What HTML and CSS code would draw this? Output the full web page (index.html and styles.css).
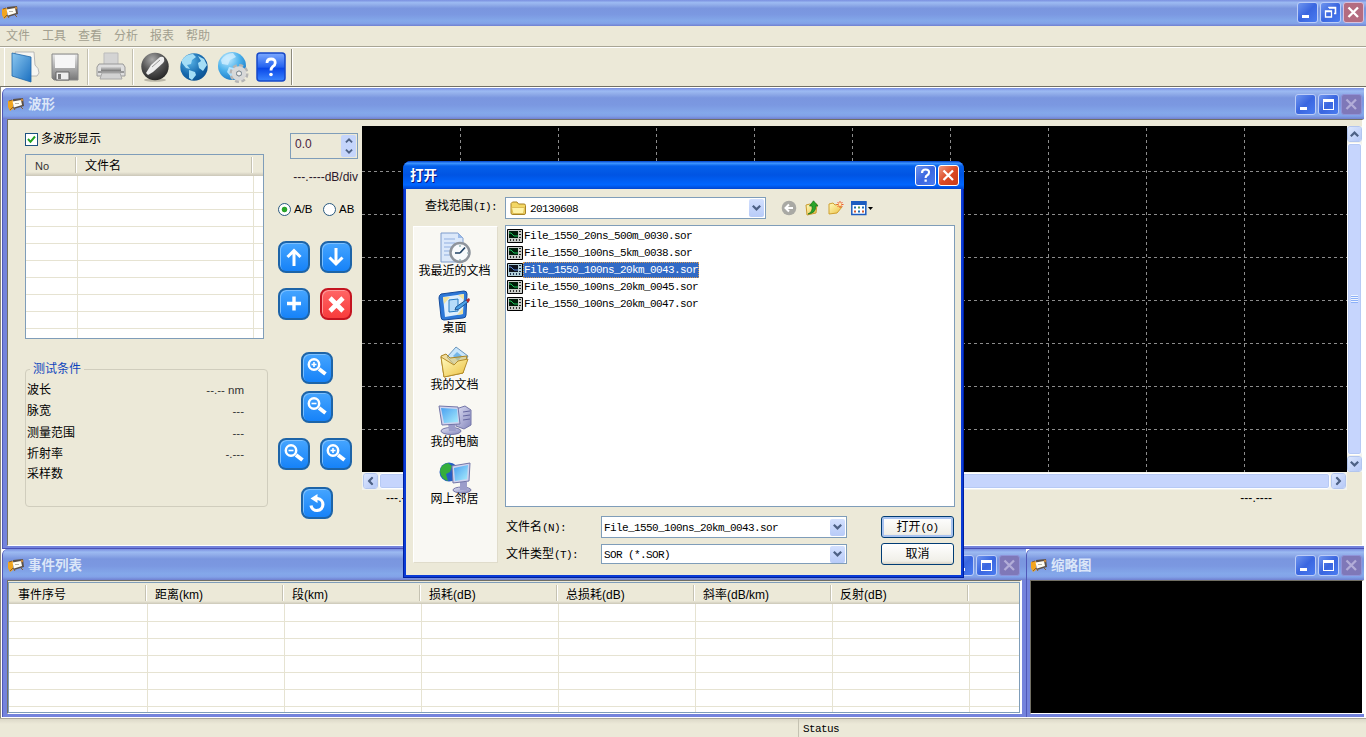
FILE: index.html
```html
<!DOCTYPE html>
<html lang="zh-CN">
<head>
<meta charset="utf-8">
<title>OTDR</title>
<link rel="stylesheet" href="styles.css">
</head>
<body>
<svg class="defs" width="0" height="0">
  <defs>
    <linearGradient id="gBlue" x1="0" y1="0" x2="1" y2="1"><stop offset="0" stop-color="#8cc8f0"/><stop offset="1" stop-color="#1a6fc0"/></linearGradient>
    <linearGradient id="gGrey" x1="0" y1="0" x2="0" y2="1"><stop offset="0" stop-color="#e8e8e8"/><stop offset="1" stop-color="#777"/></linearGradient>
    <radialGradient id="gDark" cx=".4" cy=".25" r=".8"><stop offset="0" stop-color="#aaa"/><stop offset=".5" stop-color="#555"/><stop offset="1" stop-color="#222"/></radialGradient>
    <radialGradient id="gGlobe" cx=".35" cy=".3" r=".8"><stop offset="0" stop-color="#59b4e8"/><stop offset=".6" stop-color="#1668ac"/><stop offset="1" stop-color="#0b4d8c"/></radialGradient>
    <radialGradient id="gSky" cx=".35" cy=".25" r=".85"><stop offset="0" stop-color="#c4ecff"/><stop offset=".5" stop-color="#4db2ec"/><stop offset="1" stop-color="#1170c0"/></radialGradient>
    <linearGradient id="gHelp" x1="0" y1="0" x2="0" y2="1"><stop offset="0" stop-color="#7eaaff"/><stop offset=".5" stop-color="#2563f0"/><stop offset=".55" stop-color="#0a48e8"/><stop offset="1" stop-color="#3b86ff"/></linearGradient>
    <linearGradient id="gFold" x1="0" y1="0" x2="1" y2="1"><stop offset="0" stop-color="#fffbc0"/><stop offset="1" stop-color="#ecc040"/></linearGradient>
    <linearGradient id="gScr" x1="0" y1="0" x2="1" y2="1"><stop offset="0" stop-color="#4aa0f0"/><stop offset="1" stop-color="#a8ecfc"/></linearGradient>
    <linearGradient id="gCase" x1="0" y1="0" x2="1" y2="1"><stop offset="0" stop-color="#dfe0f4"/><stop offset="1" stop-color="#8486bc"/></linearGradient>
    <symbol id="app" viewBox="0 0 16 13"><path d="M0 3 5 2v9l-3 2-2-4z" fill="#f2a51e"/><path d="M5 1 15 0l1 8-10 3z" fill="#5b5048"/><path d="M4.500 3.500 13 2l1 5-8 2.500z" fill="#fffdf4"/><path d="M7 5.500h4" stroke="#b8b4a8"/><path d="M1 3 4 2M2 12l3-3 2 3M13 9l2 2" stroke="#8b6230" fill="none"/><circle cx="14" cy="2" r="1.300" fill="#c2863b"/></symbol>
    <symbol id="scope" viewBox="0 0 16 14"><path d="M.5.5h15v13H.5z" fill="#c8ccc8" stroke="#000"/><path d="M2 2h9v7H2z" fill="#001c08"/><path d="M2 4h2l3 3h4" stroke="#19c35a" fill="none"/><path d="M13 2v1M13 5v1M13 8v1M3 11h1M6 11h1M9 11h1M12 11h1" stroke="#000" stroke-width="1.600"/></symbol>
    <symbol id="lens" viewBox="0 0 32 32"><circle cx="13" cy="12.500" r="5.200" fill="none" stroke="#fff" stroke-width="2.500"/><path d="M18 17 24.500 22" stroke="#fff" stroke-width="4"/><path d="M10.500 12.500h5" stroke="#fff" stroke-width="1.600"/></symbol>
    <symbol id="chev" viewBox="0 0 9 6"><path d="M.8.8 4.500 4.400 8.200.8" fill="none" stroke="#4d6185" stroke-width="2.200"/></symbol>
    <symbol id="close" viewBox="0 0 19 19"><path d="M4.500 4.500 14 14M14 4.500 4.500 14" stroke="currentColor" stroke-width="2.300"/></symbol>
    <symbol id="min" viewBox="0 0 19 19"><path d="M4 12h7v3H4z" fill="#fff"/></symbol>
    <symbol id="max" viewBox="0 0 19 19"><path d="M4 4h11v11H4zm1 3v7h9V7z" fill="#fff" fill-rule="evenodd"/></symbol>
  </defs>
</svg>

<div class="app">
  <header class="titlebar app-title">
    <svg class="app-icon" width="16" height="13"><use href="#app"/></svg>
    <div class="ctrls">
      <span class="cb"><svg><use href="#min"/></svg></span>
      <span class="cb"><svg viewBox="0 0 19 19"><path d="M8 5V4.500h6.500v6H13M8 5h6" fill="none" stroke="#fff" stroke-width="1.600"/><path d="M4.500 8h6v6h-6zM4 8.500h7" fill="none" stroke="#fff" stroke-width="1.300"/></svg></span>
      <span class="cb red-dim"><svg><use href="#close"/></svg></span>
    </div>
  </header>

  <nav class="menu"><span>文件</span><span>工具</span><span>查看</span><span>分析</span><span>报表</span><span>帮助</span></nav>

  <div class="toolbar">
    <svg class="tb-open" width="30" height="32" viewBox="0 0 30 32"><path d="M4 1 23 1 24 14q4 3 4 8l-2 3H10z" fill="#f6f6f2" stroke="#aaa" stroke-width=".8"/><path d="M1 2 20 6v25L1 25z" fill="url(#gBlue)" stroke="#1f66a8" stroke-width=".8"/></svg>
    <svg class="tb-save" width="28" height="28" viewBox="0 0 28 28"><path d="M1 1h26v26H3l-2-2z" fill="url(#gGrey)" stroke="#888"/><path d="M4 2h20v13H4z" fill="#f6f6f6"/><path d="M5 19h13v8H5z" fill="#eee" stroke="#666"/><path d="M7 21h3v5H7z" fill="#777"/></svg>
    <i class="sep"></i>
    <svg class="tb-print" width="30" height="30" viewBox="0 0 30 30"><path d="M8 1h14v13H8z" fill="#d4d4d4" stroke="#bbb"/><path d="M3 12h24l2 3v9H1v-9z" fill="#dedede" stroke="#999"/><path d="M5 14h20v5H5z" fill="url(#gGrey)"/><path d="M2 19h26v2H2z" fill="#999"/><path d="M6 21h18l2 6H4z" fill="#d2d2d2" stroke="#aaa"/></svg>
    <i class="sep"></i>
    <svg class="tb-tool" width="30" height="30" viewBox="0 0 30 30"><ellipse cx="15" cy="28" rx="11" ry="1.800" fill="#bbb7a8"/><circle cx="15" cy="14.500" r="13.700" fill="url(#gDark)"/><path d="M6 21 11 13 20 5q3-1 4 1 1 3-1 5l-10 9-5 3z" fill="#eee"/><path d="M12 15 20 8" stroke="#999"/></svg>
    <svg class="tb-globe" width="30" height="30" viewBox="0 0 30 30"><circle cx="15" cy="15" r="13.700" fill="url(#gGlobe)"/><path d="M3 8q4-6 11-6l3 3-4 3-1 4-4 1 3 4-4-1-4-5zM10 18l6 2 1 3-4 5-3-2zM19 4l6 3 3 6-4 6-4-3-1-5 3-2z" fill="#a4ddf6"/></svg>
    <svg class="tb-web" width="32" height="32" viewBox="0 0 32 32"><circle cx="15" cy="15" r="14" fill="url(#gSky)"/><path d="M4 9q5-7 12-7l3 4-6 3-2 5-6-1zM12 16l5 1 1 5-3 5-5-6z" fill="#cfeeff" opacity=".8"/><circle cx="22" cy="22.500" r="7.500" fill="none" stroke="#b4b4b4" stroke-width="4" stroke-dasharray="3.600 2.290"/><circle cx="22" cy="22.500" r="5" fill="none" stroke="#d8d8d8" stroke-width="4.500"/><circle cx="22" cy="22.500" r="2.500" fill="#eee" stroke="#888"/></svg>
    <svg class="tb-help" width="30" height="30" viewBox="0 0 30 30"><rect x="1" y="1" width="28" height="28" rx="3" fill="url(#gHelp)" stroke="#1648c8" stroke-width="1.500"/><path d="M11 11q0-4 4.200-4t4 4q0 2-2.500 3.600Q15 16 15 18.500" fill="none" stroke="#fff" stroke-width="2.800"/><circle cx="15" cy="22.500" r="1.800" fill="#fff"/></svg>
    <i class="sep end"></i>
  </div>

  <main class="mdi">
    <section class="win wave">
      <header class="titlebar">
        <svg class="app-icon" width="16" height="13"><use href="#app"/></svg><h2>波形</h2>
        <div class="ctrls"><span class="cb"><svg><use href="#min"/></svg></span><span class="cb"><svg><use href="#max"/></svg></span><span class="cb off"><svg><use href="#close"/></svg></span></div>
      </header>
      <div class="client wave-client">
        <div class="side">
          <label class="check"><i class="box"><svg width="9" height="9" viewBox="0 0 9 9"><path d="M1 4 3.500 6.800 8 1.500" fill="none" stroke="#21a121" stroke-width="2"/></svg></i>多波形显示</label>
          <div class="list files-list">
            <div class="list-head"><span>No</span><span>文件名</span><span></span></div>
            <div class="list-body"></div>
          </div>
          <fieldset class="cond">
            <legend>测试条件</legend>
            <dl>
              <dt>波长</dt><dd><b>--.--</b> nm</dd>
              <dt>脉宽</dt><dd><b>---</b></dd>
              <dt>测量范围</dt><dd><b>---</b></dd>
              <dt>折射率</dt><dd><b>-.---</b></dd>
              <dt>采样数</dt><dd></dd>
            </dl>
          </fieldset>
        </div>
        <div class="controls">
          <div class="spin"><span>0.0</span><i><svg class="up" width="8" height="5"><use href="#chev"/></svg><svg width="8" height="5"><use href="#chev"/></svg></i></div>
          <div class="div-label">---.----dB/div</div>
          <div class="radios"><i class="radio on"></i><span>A/B</span><i class="radio"></i><span>AB</span></div>
          <div class="pair p1">
            <span class="btn"><svg viewBox="0 0 32 32"><path d="M16 25V10M9.500 16 16 9.500 22.500 16" fill="none" stroke="#fff" stroke-width="3"/></svg></span>
            <span class="btn"><svg viewBox="0 0 32 32"><path d="M16 7v15M9.500 16.500 16 23 22.500 16.500" fill="none" stroke="#fff" stroke-width="3"/></svg></span>
          </div>
          <div class="pair p2">
            <span class="btn"><svg viewBox="0 0 32 32"><path d="M16 8.500v14M9 15.500h14" stroke="#fff" stroke-width="3.400"/></svg></span>
            <span class="btn red"><svg viewBox="0 0 32 32"><path d="M10 10 23 23M23 10 10 23" stroke="#fff" stroke-width="4.600"/></svg></span>
          </div>
          <div class="pair single p3"><span class="btn"><svg viewBox="0 0 32 32"><use href="#lens"/><path d="M13 10v5" stroke="#fff" stroke-width="1.600"/></svg></span></div>
          <div class="pair single p4"><span class="btn"><svg><use href="#lens"/></svg></span></div>
          <div class="pair p5">
            <span class="btn"><svg><use href="#lens"/></svg></span>
            <span class="btn"><svg viewBox="0 0 32 32"><use href="#lens"/><path d="M13 10v5" stroke="#fff" stroke-width="1.600"/></svg></span>
          </div>
          <div class="pair single p6"><span class="btn"><svg viewBox="0 0 32 32"><path d="M14 11.500h2.500a6 6 0 1 1-6.500 7" fill="none" stroke="#fff" stroke-width="3.200"/><path d="M9.500 11.500 16.500 7v9z" fill="#fff"/></svg></span></div>
        </div>
        <div class="plot">
          <svg class="chart" width="985" height="346" viewBox="0 0 985 346">
            <g fill="none" stroke="#8c8c8c" stroke-dasharray="3 3">
              <path d="M98.500 2V346M196.500 2V346M294.500 2V346M392.500 2V346M490.500 2V346M588.500 2V346M686.500 2V346M784.500 2V346M882.500 2V346"/>
              <path d="M0 45.500H985M0 88.500H985M0 131.500H985M0 174.500H985M0 217.500H985M0 260.500H985M0 303.500H985"/>
            </g>
          </svg>
          <div class="vbar"><i class="sb"><svg class="up" width="9" height="6"><use href="#chev"/></svg></i><i class="thumb"><em></em></i><i class="sb"><svg width="9" height="6"><use href="#chev"/></svg></i></div>
          <div class="hbar"><i class="sb"><svg class="left" width="9" height="6"><use href="#chev"/></svg></i><i class="thumb"></i><i class="sb"><svg class="right" width="9" height="6"><use href="#chev"/></svg></i></div>
          <div class="axis"><span>---.----</span><span>---.----</span></div>
        </div>
      </div>
    </section>

    <section class="win events">
      <header class="titlebar">
        <svg class="app-icon" width="16" height="13"><use href="#app"/></svg><h2>事件列表</h2>
        <div class="ctrls"><span class="cb"><svg><use href="#min"/></svg></span><span class="cb"><svg><use href="#max"/></svg></span><span class="cb off"><svg><use href="#close"/></svg></span></div>
      </header>
      <div class="client">
        <div class="list event-list">
          <div class="list-head"><span>事件序号</span><span>距离(km)</span><span>段(km)</span><span>损耗(dB)</span><span>总损耗(dB)</span><span>斜率(dB/km)</span><span>反射(dB)</span><span></span></div>
          <div class="list-body"></div>
        </div>
      </div>
    </section>

    <section class="win thumbnail">
      <header class="titlebar">
        <svg class="app-icon" width="16" height="13"><use href="#app"/></svg><h2>缩略图</h2>
        <div class="ctrls"><span class="cb"><svg><use href="#min"/></svg></span><span class="cb"><svg><use href="#max"/></svg></span><span class="cb off"><svg><use href="#close"/></svg></span></div>
      </header>
      <div class="client"></div>
    </section>
  </main>

  <footer class="status"><span></span><span class="mono">Status</span></footer>
</div>

<section class="dialog">
  <header class="dlg-title"><h2>打开</h2>
    <span class="cb help"><svg viewBox="0 0 19 19"><path d="M6 7q0-3.500 3.600-3.500T13 6.600q0 1.600-1.800 2.600-1.600 1-1.600 2.800" fill="none" stroke="#fff" stroke-width="2.200"/><path d="M8.500 13.500h2.300v2.300H8.500z" fill="#fff"/></svg></span>
    <span class="cb red"><svg><use href="#close"/></svg></span>
  </header>
  <div class="dlg-body">
    <div class="look">
      <label>查找范围<span class="mono">(I):</span></label>
      <div class="combo">
        <svg width="17" height="15" viewBox="0 0 17 15"><path d="M1 4V2.500L2.500 1H7l1.500 2H14q1.500 0 1.500 1.500V12q0 1.500-1.500 1.500H3Q1 13.500 1 12z" fill="#f3d765" stroke="#a98325"/><path d="M1.500 6.500h13l-1 6H3z" fill="#fff3a8" stroke="#d4af45" stroke-width=".7"/></svg>
        <span class="mono">20130608</span><i class="drop"><svg width="9" height="6"><use href="#chev"/></svg></i>
      </div>
      <div class="nav-icons">
        <svg width="16" height="16" viewBox="0 0 16 16"><circle cx="8" cy="8" r="7.300" fill="#a9a9a4"/><path d="M12 8H5M8 4.500 4.500 8 8 11.500" fill="none" stroke="#fff" stroke-width="2"/></svg>
        <svg width="16" height="16" viewBox="0 0 16 16"><path d="M2 5 6 4l2 1 5-1-1 9-9 2z" fill="url(#gFold)" stroke="#c99a2c"/><path d="M4 14q5-2 4-8H5.500L9.500.8l4.500 5.200h-2.500q1 7-7.500 8z" fill="#2aa52a" stroke="#13701a" stroke-width=".7"/></svg>
        <svg width="17" height="16" viewBox="0 0 17 16"><path d="M2 4 6 3l2 2 5-1v3l2 0-5 6-8 1z" fill="url(#gFold)" stroke="#cfa030"/><path d="M13 1v7M9.500 4.500h7M10.500 2l5 5M15.500 2l-5 5" stroke="#ee5b2b"/><circle cx="13" cy="4.500" r="1.400" fill="#fff0b0"/></svg>
        <svg width="24" height="16" viewBox="0 0 24 16"><path d="M.8 2h14v12.500H.8z" fill="#fff" stroke="#1b5cc0" stroke-width="1.500"/><path d="M0 1h15.500v4H0z" fill="#1b5cc0"/><path d="M3 7.500h2M11 7.500h2M7 11.500h2" stroke="#186cb4" stroke-width="2"/><path d="M7 7.500h2" stroke="#5a9a50" stroke-width="2"/><path d="M3 11.500h2M11 11.500h2" stroke="#cf5b31" stroke-width="2"/><path d="M17 7h5l-2.500 3z"/></svg>
      </div>
    </div>
    <aside class="places">
      <div><svg width="34" height="34" viewBox="0 0 34 34"><path d="M3 1h17l5 5v24H3z" fill="#dbe8fa" stroke="#7f9ccb"/><path d="M20 1v5h5z" fill="#9bbae8"/><path d="M6 7h11M6 11h11M6 15h8M6 19h7M6 23h7" stroke="#91afe0"/><circle cx="22" cy="20.500" r="9.500" fill="#f8fafc" stroke="#8e949c" stroke-width="2.500"/><path d="M22 21 27 15.500M22 21h-5" stroke="#246" stroke-width="1.700"/><path d="M22 13v2M22 27v2M29 21h1" stroke="#699"/></svg><span>我最近的文档</span></div>
      <div><svg width="34" height="34" viewBox="0 0 34 34"><path d="M3 5 26 2q3 0 3 3l-1 21q0 3-3 3L6 31q-3 0-3-3L1 9q0-3 2-4z" fill="#2d78d8" stroke="#154c9c"/><path d="M5 8 26 5l-1 20-18 3z" fill="#dceefe"/><path d="M5 8h7l-6 7zM19 26l6-7v6zM20 6l6-1v6z" fill="#f1e39f"/><path d="M11 11 20 10v12l-9 1z" fill="#b6dcfa" stroke="#247bc5"/><path d="M18 18 28 11l2 2-9 7-4 1z" fill="#4ba0e6" stroke="#205998"/><path d="M28 11l3-2 1 2-2 3z" fill="#b32b2b"/></svg><span>桌面</span></div>
      <div><svg width="34" height="34" viewBox="0 0 34 34"><path d="M9 11 18 1l12 9-8 15z" fill="#c8e5fa" stroke="#6995bd"/><path d="M15 10 19 6l5 4-4 5z" fill="#74b6e8"/><path d="M3 10 8 8l4 4 17-2-4 17-19 4z" fill="#eac75b" stroke="#ad8420" fill-opacity=".55"/><path d="M3 11 6 31 25 27 30 13 20 15 16 19z" fill="url(#gFold)" stroke="#b58e2c"/></svg><span>我的文档</span></div>
      <div><svg width="34" height="34" viewBox="0 0 34 34"><path d="M18 6 27 3l6 4v15l-7 4-8-3z" fill="url(#gCase)" stroke="#7476a8"/><path d="M25 9 32 8M25 13l7-1M25 17l7-1" stroke="#6466a0"/><ellipse cx="13" cy="28" rx="10" ry="3.500" fill="url(#gCase)" stroke="#7677a9"/><path d="M10 20h7l1 8h-7z" fill="#9c9dca"/><path d="M1 3 20 4l2 17-18 1z" fill="#cfd3ef" stroke="#7476a8"/><path d="M3 5 19 6l1 13-14 1z" fill="url(#gScr)"/></svg><span>我的电脑</span></div>
      <div><svg width="34" height="34" viewBox="0 0 34 34"><circle cx="11" cy="12" r="9.500" fill="#245fc4"/><path d="M2 11q1-7 8-8l4 3-2 6-4 2 2 7q-7-2-8-10z" fill="#35ae3c"/><ellipse cx="24" cy="30" rx="9" ry="3" fill="url(#gCase)" stroke="#7677a9"/><path d="M22 22h7v8h-7z" fill="#9c9dca"/><path d="M14 6 32 3l-1 18-16 2z" fill="#cfd3ef" stroke="#7476a8"/><path d="M16 8 30 5l-1 14-12 2z" fill="url(#gScr)"/></svg><span>网上邻居</span></div>
    </aside>
    <ul class="files">
      <li><svg><use href="#scope"/></svg><span class="mono">File_1550_20ns_500m_0030.sor</span></li>
      <li><svg><use href="#scope"/></svg><span class="mono">File_1550_100ns_5km_0038.sor</span></li>
      <li class="sel"><svg><use href="#scope"/></svg><span class="mono">File_1550_100ns_20km_0043.sor</span></li>
      <li><svg><use href="#scope"/></svg><span class="mono">File_1550_100ns_20km_0045.sor</span></li>
      <li><svg><use href="#scope"/></svg><span class="mono">File_1550_100ns_20km_0047.sor</span></li>
    </ul>
    <div class="form">
      <label>文件名<span class="mono">(N):</span></label>
      <div class="combo"><span class="mono">File_1550_100ns_20km_0043.sor</span><i class="drop"><svg width="9" height="6"><use href="#chev"/></svg></i></div>
      <span class="push default">打开<span class="mono">(O)</span></span>
      <label>文件类型<span class="mono">(T):</span></label>
      <div class="combo"><span class="mono">SOR (*.SOR)</span><i class="drop"><svg width="9" height="6"><use href="#chev"/></svg></i></div>
      <span class="push">取消</span>
    </div>
  </div>
</section>
</body>
</html>
```
FILE: styles.css
```css
* { box-sizing: border-box; margin: 0; padding: 0; }
body {
  width: 1366px; height: 737px; overflow: hidden; position: relative;
  background: #ece9d8; color: #000;
  font: 12px/16px "Liberation Sans", "Noto Sans CJK SC", sans-serif;
}
svg { display: block; flex: none; }
i, em, b { font-style: normal; font-weight: normal; }
.defs { position: absolute; }
.mono { font-family: "Liberation Mono", "Noto Sans CJK SC", monospace; font-size: 11px; letter-spacing: -0.6px; white-space: pre; }
.app { display: flex; flex-direction: column; height: 737px; }

/* title bars */
.titlebar {
  display: flex; align-items: center; height: 31px; flex: none; padding: 2px 2px 0 5px;
  background: linear-gradient(#7a8fe0 0, #9cbaf2 10%, #92aeea 18%, #7a96df 32%, #7b98e1 55%, #84a8ea 80%, #82a2e8 90%, #7080d0 100%);
}
.titlebar h2 { font-size: 13.5px; font-weight: 700; color: #dbe6f8; margin-left: 4px; line-height: 18px; }
.app-title { height: 26px; padding: 0 2px 1px 2px; }
.ctrls { display: flex; gap: 2px; margin-left: auto; }
.cb {
  width: 21px; height: 21px; flex: none; border: 1px solid #bccdf8; border-radius: 3px; color: #fff;
  background: linear-gradient(135deg, #6f95ee, #3a66e0 50%, #4a7cf0);
}
.cb svg { width: 19px; height: 19px; }
.cb.red-dim { background: #b46c80; border-color: #d8c0dc; }
.cb.off { background: #7f78b8; border-color: #8f92d8; color: #b2add8; }
.cb.red { background: linear-gradient(135deg, #f09880, #dc4a24 50%, #c83c18); border-color: #fff; }
.cb.help { border-color: #fff; }

/* menu and toolbar */
.menu { display: flex; gap: 12px; height: 22px; flex: none; padding: 2px 0 0 6px; color: #a29f8f; border-bottom: 1px solid #fff; box-shadow: inset 0 -1px #a8a595; line-height: 17px; }
.toolbar { display: flex; align-items: center; height: 38px; flex: none; margin-left: 4px; border-left: 1px solid #fff; }
.sep { width: 2px; height: 36px; border-left: 1px solid #c3c0b0; border-right: 1px solid #fff; }
.tb-open { margin-left: 6px; }
.tb-save { margin-left: 10px; margin-right: 8px; }
.tb-print { margin: 0 6px 0 7px; }
.tb-tool { margin-left: 6px; }
.tb-globe { margin-left: 9px; }
.tb-web { margin-left: 8px; }
.tb-help { margin: 0 5px 0 7px; }
.sep.end { border-left-color: #8c8a7c; }

/* MDI area */
.mdi {
  display: grid; grid-template: 461px 168px / 1024px 338px; height: 632px; flex: none;
  padding: 1px 2px 0 1px; border-top: 1px solid #716f64; border-left: 1px solid #8c897c; background: #fff;
}
.win { display: flex; flex-direction: column; background: #7483dc; padding-bottom: 3px; min-width: 0; min-height: 0; border-left: 1px solid #5058b8; border-radius: 6px 0 0 0; overflow: hidden; }
.wave { grid-column: 1 / 3; border-bottom: 1px solid #4a51b8; padding-bottom: 2px; }
.client { flex: 1; margin-left: 4px; border: solid; border-width: 1px 2px 1px 1px; border-color: #716f64 #fff #fff #716f64; background: #ece9d8; min-height: 0; }
.wave-client { display: flex; padding-top: 6px; }
.events { padding-right: 4px; }
.events .titlebar { margin-right: -4px; padding-right: 6px; }
.events .client { padding: 1px 0 0 0; }
.thumbnail .client { background: #000; margin-left: 3px; }
.thumbnail .titlebar { padding-left: 4px; }

/* waveform side panel */
.side { width: 265px; padding: 5px 0 0 17px; }
.check { display: flex; align-items: center; gap: 3px; height: 16px; }
.box { width: 13px; height: 13px; border: 1px solid #1c5180; background: #fff; padding: 1px; }
.list { background: #fff; border: 1px solid #7f9db9; }
.list-head { display: flex; height: 21px; background: linear-gradient(#ece9d8 17px, #cbc7b8); line-height: 22px; }
.list-head span { border-right: 1px solid #c5c2b2; box-shadow: 1px 0 #fff; height: 16px; margin-top: 2px; line-height: 19px; flex: none; }
.list-head span:last-child { border: 0; box-shadow: none; }
.files-list { width: 239px; height: 185px; margin-top: 7px; }
.files-list .list-head span:nth-child(1) { width: 50px; padding-left: 9px; color: #333; font-size: 11px; }
.files-list .list-head span:nth-child(2) { width: 176px; padding-left: 9px; }
.list-body { height: calc(100% - 21px); }
.files-list .list-body {
  background: linear-gradient(#e6e3d2, #e6e3d2) 51px 0 / 1px 100% no-repeat, linear-gradient(#e6e3d2, #e6e3d2) 227px 0 / 1px 100% no-repeat,
    repeating-linear-gradient(#fff 0 16px, #e6e3d2 16px 17px);
}
.cond { width: 243px; height: 146px; margin-top: 22px; border: 1px solid #d0cdbd; border-radius: 4px; padding: 0 23px 0 1px; }
.cond legend { color: #0f45bd; margin-left: 3px; padding: 0 3px; height: 16px; }
.cond dl { display: grid; grid-template-columns: 1fr auto; grid-template-rows: 21px 22px 22px 20px 20px; align-items: center; margin-top: 2px; line-height: 16px; }
.cond dd { color: #333; font-size: 11.5px; text-align: right; }

/* waveform buttons */
.controls { width: 89px; flex: none; padding-top: 7px; }
.spin { display: flex; width: 68px; height: 26px; margin-left: 17px; border: 1px solid #7f9db9; color: #4a2440; }
.spin span { flex: 1; padding: 2px 0 0 4px; }
.spin i { width: 15px; margin: 1px; border-radius: 2px; background: #c5d5fb; display: flex; flex-direction: column; justify-content: space-around; align-items: center; }
.up { transform: rotate(180deg); }
.left { transform: rotate(90deg); }
.right { transform: rotate(-90deg); }
.div-label { text-align: right; padding-right: 4px; margin-top: 10px; color: #2c1a2c; }
.radios { display: flex; align-items: center; margin: 16px 0 0 5px; height: 16px; font-size: 11.5px; }
.radio { width: 13px; height: 13px; flex: none; border: 1px solid #2a5a80; border-radius: 50%; background: #fff; }
.radio.on { background: radial-gradient(circle, #2aa52a 0 2.4px, #fff 3.2px); }
.radios span { width: 32px; flex: none; padding-left: 3px; }
.pair { display: flex; gap: 10px; height: 32px; padding-left: 5px; }
.single { padding-left: 28px; }
.btn { width: 32px; height: 32px; flex: none; border: 2px solid #1d64a8; border-radius: 8px; background: linear-gradient(#45a5ff, #1682f8); box-shadow: inset 1px 1px #7cc0ff; }
.btn.red { background: linear-gradient(#ff6565, #f83c3c); border-color: #c41420; box-shadow: inset 1px 1px #ff9a9a; }
.btn svg { width: 32px; height: 32px; margin: -2px; }
.p1 { margin-top: 24px; }
.p2, .p5 { margin-top: 15px; }
.p3 { margin-top: 32px; }
.p4 { margin-top: 7px; }
.p6 { margin-top: 17px; }

/* plot */
.plot { display: grid; grid-template: 346px 18px 16px / 985px 15px; align-content: start; }
.chart { background: #000; }
.vbar, .hbar { display: flex; background: #f3f3ec; gap: 1px; padding: 1px; }
.vbar { flex-direction: column; padding: 0; }
.sb { width: 15px; height: 16px; flex: none; display: grid; place-items: center; background: linear-gradient(135deg, #dce7fe, #b5c8f7); border: 1px solid #fff; border-radius: 3px; outline: 1px solid #b3c6ee; outline-offset: -1px; }
.thumb { flex: 1; background: #c6d5fd; border: 1px solid #fff; border-radius: 3px; display: grid; place-items: center; box-shadow: inset 0 0 0 1px #b7caf5; }
.thumb em { width: 7px; height: 8px; background: repeating-linear-gradient(#eef4fe 0 1px, #8cb0f8 1px 2px); }
.hbar, .axis { grid-column: 1; }
.axis { display: flex; justify-content: space-between; padding: 0 75px 0 24px; line-height: 16px; white-space: nowrap; letter-spacing: .05px; }

/* events */
.event-list { height: 131px; }
.event-list .list-head { background: linear-gradient(#ece9d8 18px, #cbc7b8); line-height: 20px; }
.event-list .list-head span { width: 137px; padding-left: 9px; line-height: 20px; }
.event-list .list-head span:last-child { width: 40px; }
.event-list .list-body {
  background: repeating-linear-gradient(90deg, transparent 0 136px, #e6e3d2 136px 137px) 2px 0, repeating-linear-gradient(#fff 0 16px, #e6e3d2 16px 17px) 0 1px;
}

/* status bar */
.status { display: flex; flex: 1; border-top: 1px solid #aca899; background: linear-gradient(#dcd8c8, #ece9d8 5px); line-height: 20px; }
.status span:first-child { width: 799px; border-right: 1px solid #c5c2b2; margin-right: 4px; }

/* open-file dialog floats over the windows */
.dialog {
  position: absolute; left: 403px; top: 161px; width: 561px; height: 417px; display: flex; flex-direction: column;
  border-radius: 8px 8px 0 0; overflow: hidden; background: #0a3bd6; padding: 0 3px 3px; box-shadow: inset 0 0 0 1px #0020a0;
}
.dlg-title {
  display: flex; align-items: center; gap: 2px; height: 28px; flex: none; margin: 0 -3px; padding: 1px 5px 0 7px;
  background: linear-gradient(#0040c8 0, #3d95ff 8%, #0560ea 18%, #0054e3 50%, #0066ff 85%, #0046d0 100%);
}
.dlg-title h2 { flex: 1; color: #fff; font-size: 13.5px; text-shadow: 1px 1px #0a1883; }
.dlg-body {
  flex: 1; background: #ece9d8; display: grid; min-height: 0;
  grid-template: 36px 282px 1fr / 85px 450px; column-gap: 7px; padding: 0 0 0 7px;
}
.look { grid-column: 1 / 3; display: flex; padding: 8px 0 0 12px; height: 36px; }
.look label { width: 80px; padding-top: 1px; }
.combo { display: flex; align-items: center; background: #fff; border: 1px solid #7f9db9; padding: 0 1px 0 2px; min-width: 0; }
.combo .mono { flex: 1; padding-top: 1px; }
.drop { width: 15px; height: 18px; display: grid; place-items: center; background: linear-gradient(#d3e0fe, #b8cbf8); border-radius: 2px; }
.look .combo { width: 261px; height: 22px; padding-left: 4px; }
.look .combo .mono { padding-left: 3px; }
.nav-icons { display: flex; gap: 7px; margin: 3px 0 0 15px; }
.places { grid-row: 2 / 4; height: 337px; margin-top: 1px; padding: 5px 2px 0 0; background: #f9f8f3; border: 1px solid #e0dccb; border-top-color: #fff; border-left-color: #fff; }
.places div { height: 57px; display: flex; flex-direction: column; align-items: center; }
.places span { margin-top: -2px; line-height: 14px; white-space: nowrap; }
.files { list-style: none; background: #fff; border: 1px solid #7f9db9; padding: 1px 0 0 1px; }
.files li { display: flex; align-items: center; height: 17px; }
.files svg { width: 16px; height: 14px; }
.files span { line-height: 16px; height: 16px; padding: 0 1px; }
.sel span { background: #316ac5; color: #fff; outline: 1px dotted #d89a50; outline-offset: -1px; }
.sel svg { filter: sepia(1) hue-rotate(180deg) saturate(3) brightness(.85); }
.form { display: grid; grid-template: 22px 20px / 96px 246px 73px; row-gap: 6px; column-gap: 0; padding-top: 9px; align-items: center; }
.form label { padding-left: 1px; }
.form .combo { height: 100%; }
.form .drop { height: 17px; }
.push { width: 73px; margin-left: 34px; height: 22px; border: 1px solid #003c74; border-radius: 3px; background: linear-gradient(#fff, #f0efe8 85%, #d8d2c4); text-align: center; line-height: 20px; }
.push.default { box-shadow: inset 0 0 0 2px #a9c3f0; }
```
